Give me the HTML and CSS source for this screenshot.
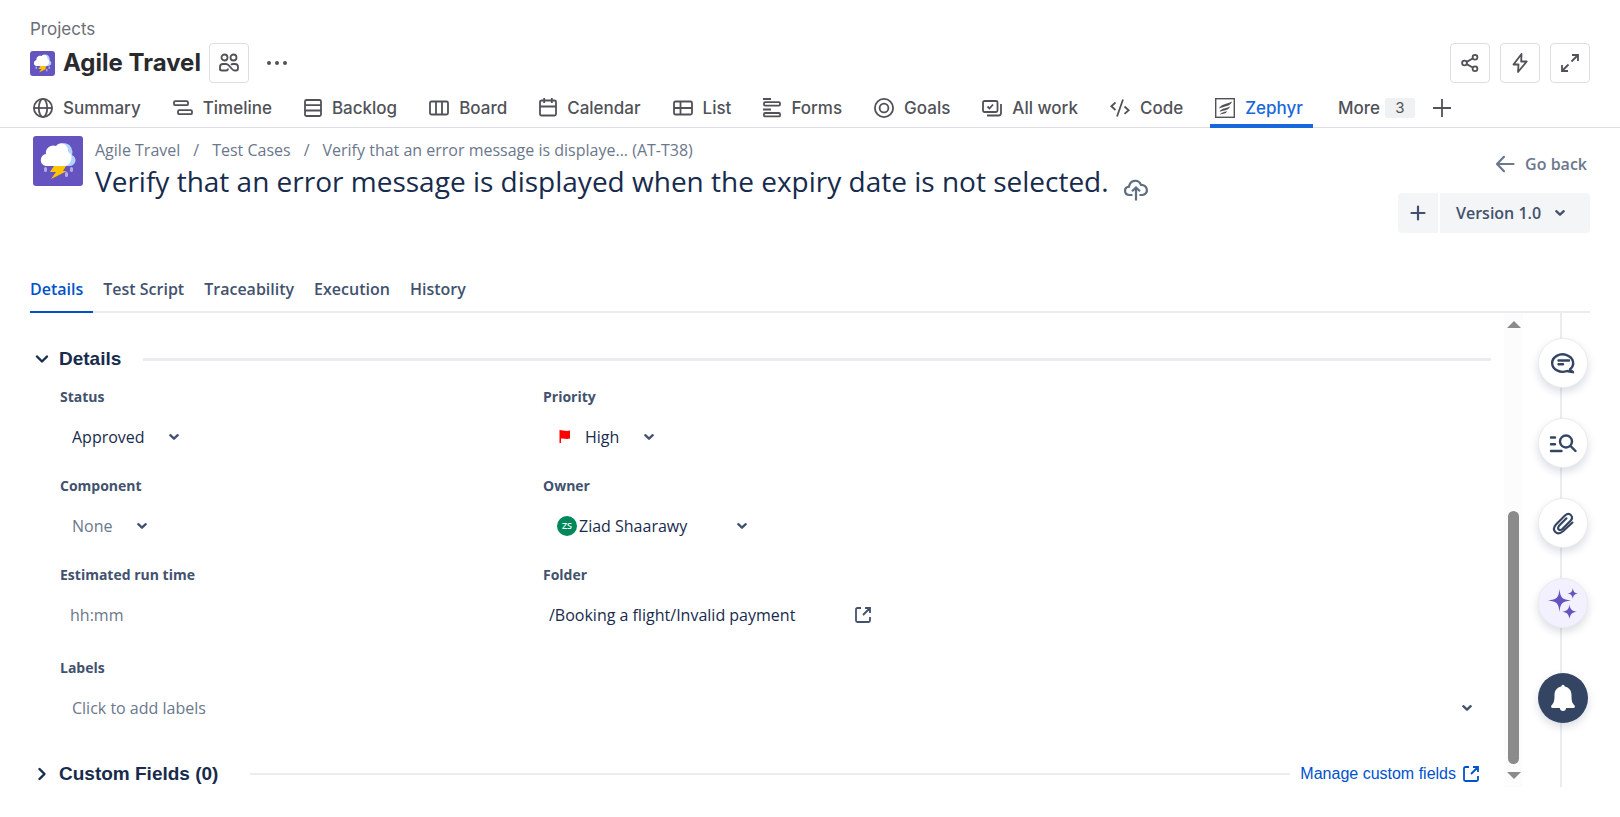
FILE: index.html
```html
<!DOCTYPE html>
<html lang="en">
<head>
<meta charset="utf-8">
<title>Agile Travel - Zephyr</title>
<link rel="stylesheet" href="styles.css">
</head>
<body>
<svg class="defs" aria-hidden="true">
  <symbol id="storm" viewBox="0 0 50 50">
    <rect width="50" height="50" fill="#6554c0"/>
    <path fill="#b3d4ff" d="M26 9c5-4 12-1 13 5 1 2 0 4 0 5 6 3 4 11-3 11H24z"/>
    <path fill="#fff" d="M14 30c-8 0-8-11-1-12-1-6 5-10 10-8 5-6 13-1 12 6 4 2 4 5 3 8-1 4-4 6-7 6z"/>
    <path fill="#ffc400" d="M21 30h12l-3 5h4L18 43l5-7h-6z"/>
    <g fill="#b3a9e6"><rect x="11" y="31" width="3" height="5" rx="1.5"/><rect x="37" y="31" width="3" height="5" rx="1.5"/><rect x="32" y="36" width="3" height="5" rx="1.5"/></g>
  </symbol>
  <symbol id="chev" viewBox="0 0 10 10"><path d="M1.300 3.200 5 6.700l3.700-3.500" fill="none" stroke="currentColor" stroke-width="2.300" stroke-linecap="round" stroke-linejoin="round"/></symbol>
  <symbol id="open" viewBox="0 0 16 16"><path d="M6 1H2.500Q1 1 1 2.500v11Q1 15 2.500 15h11q1.500 0 1.500-1.500V10M10 1h5v5M14.500 1.500 8 8" fill="none" stroke="currentColor" stroke-width="1.800"/></symbol>
</svg>

<header class="project">
  <a class="projects-link" href="#">Projects</a>
  <div class="project-row">
    <svg class="project-logo"><use href="#storm"/></svg>
    <h1 class="project-name">Agile Travel</h1>
    <button class="icon-btn" aria-label="Team"><svg class="i20" viewBox="0 0 20 20"><circle cx="5.500" cy="4.500" r="3"/><circle cx="14.500" cy="4.500" r="3"/><path d="M1 17.500V14q0-3 3-3h3q1.500 0 2.500 1.200l4 4.300q.9 1 2.200 1H17q2 0 2-2V14q0-3-3-3h-2q-1.200 0-2 .8M1 15.500q0 2 2 2h4q2 0 2-2"/></svg></button>
    <button class="plain-btn more-btn" aria-label="More actions"><svg class="i20" viewBox="0 0 20 20"><g fill="currentColor" stroke="none"><circle cx="2" cy="10" r="2"/><circle cx="10" cy="10" r="2"/><circle cx="18" cy="10" r="2"/></g></svg></button>
    <div class="project-tools">
      <button class="icon-btn" aria-label="Share"><svg class="i20" viewBox="0 0 20 20"><circle cx="4.500" cy="10" r="2.400"/><circle cx="15" cy="4.300" r="2.400"/><circle cx="15" cy="15.700" r="2.400"/><path d="m6.700 8.900 6-3.400M6.700 11.100l6 3.400"/></svg></button>
      <button class="icon-btn" aria-label="Automation"><svg class="i20" viewBox="0 0 20 20"><path d="M11.500 1 3.500 11.500h5L8 19l8.700-10.500h-5.500z" stroke-linejoin="round"/></svg></button>
      <button class="icon-btn" aria-label="Full screen"><svg class="i20" viewBox="0 0 20 20"><path d="M12 2h6v6M17.500 2.500 11.500 8.500M8 18H2v-6M2.500 17.500l6-6"/></svg></button>
    </div>
  </div>
  <nav class="project-nav">
    <a class="tab" href="#"><svg class="i20" viewBox="0 0 20 20"><circle cx="10" cy="10" r="9.100"/><ellipse cx="10" cy="10" rx="4.200" ry="9.100"/><path d="M1 10h18"/></svg>Summary</a>
    <a class="tab" href="#"><svg class="i20" viewBox="0 0 20 20"><rect x="1" y="3.200" width="14" height="4" rx="1.300"/><rect x="5" y="12.200" width="14" height="4" rx="1.300"/></svg>Timeline</a>
    <a class="tab" href="#"><svg class="i18" viewBox="0 0 18 20"><rect x="1" y="2" width="16" height="16" rx="1.500"/><path d="M1 7.200h16M1 12.500h16"/></svg>Backlog</a>
    <a class="tab" href="#"><svg class="i20" viewBox="0 0 20 20"><rect x="1" y="3.500" width="18" height="13" rx="1.500"/><path d="M7 3.500v13M13 3.500v13"/></svg>Board</a>
    <a class="tab" href="#"><svg class="i18" viewBox="0 0 18 20"><rect x="1" y="2.500" width="16" height="15" rx="1.500"/><path d="M1 8.500h16M5.200 0v5M12.800 0v5"/></svg>Calendar</a>
    <a class="tab" href="#"><svg class="i20" viewBox="0 0 20 20"><rect x="1" y="3.500" width="18" height="13" rx="1.500"/><path d="M1 10h18M7.500 3.500v13"/></svg>List</a>
    <a class="tab" href="#"><svg class="i18" viewBox="0 0 18 20"><path d="M0 1h8M0 11.500h8"/><rect x="1" y="4.200" width="16" height="3.400" rx="1"/><rect x="1" y="15" width="16" height="3.400" rx="1"/></svg>Forms</a>
    <a class="tab" href="#"><svg class="i20" viewBox="0 0 20 20"><circle cx="10" cy="10" r="9.100"/><circle cx="10" cy="10" r="4.400"/></svg>Goals</a>
    <a class="tab" href="#"><svg class="i20" viewBox="0 0 20 20"><rect x="1" y="3" width="14.500" height="11" rx="1.500"/><path d="m5.500 8.500 2 2 3.500-4M19 6v9q0 2.500-2.500 2.500H5"/></svg>All work</a>
    <a class="tab" href="#"><svg class="i20" viewBox="0 0 20 20"><path d="M5.500 4.500 1.300 8.200 5.500 12M14.500 8.500l4.200 3.700-4.200 3.700M13 1.500 7 18.500"/></svg>Code</a>
    <a class="tab tab-active" href="#" aria-current="page"><svg class="i20 zephyr" viewBox="0 0 20 20"><rect x=".7" y=".7" width="18.600" height="18.600"/><path class="feather" d="M4 10.500C6 6 11 6.500 17 3.500 16 8 9 8.500 4 10.500zM4.500 13.700c2-3.500 6-3 10.500-5.200-1 4.200-6 3.500-10.500 5.200zM5 16.600c1.500-2.600 4-2.100 7-3.600-.8 3-4 2.500-7 3.600z"/></svg>Zephyr</a>
    <a class="tab tab-more" href="#">More <span class="badge">3</span></a>
    <button class="plain-btn add-tab" aria-label="Add view"><svg class="i20" viewBox="0 0 20 20"><path d="M10 1v18M1 10h18"/></svg></button>
  </nav>
</header>

<main class="case">
  <div class="case-head">
    <svg class="case-logo"><use href="#storm"/></svg>
    <div class="case-title">
      <nav class="crumbs"><a href="#">Agile Travel</a><span>/</span><a href="#">Test Cases</a><span>/</span><a href="#">Verify that an error message is displaye... (AT-T38)</a></nav>
      <h2 class="case-name">Verify that an error message is displayed when the expiry date is not selected.
        <svg class="cloud" viewBox="0 0 26 24"><path d="M9.500 17H6.500C1 17 .3 9.500 6 8.700 7 2 15 .5 18 6.800c6.500-.3 8.500 9 1.500 10.200h-3M13 22.500V10M9 13.300l4-3.800 4 3.800"/></svg></h2>
    </div>
    <div class="case-actions">
      <a class="back" href="#"><svg class="i20" viewBox="0 0 20 20"><path d="M18.500 10H2.500M9 2.800 2 10l7 7.200" stroke-linecap="round" stroke-linejoin="round"/></svg>Go back</a>
      <div class="version">
        <button class="version-add" aria-label="New version"><svg class="i20" viewBox="0 0 20 20"><path d="M10 3.500v13M3.500 10h13" stroke-linecap="round"/></svg></button>
        <button class="version-pick">Version 1.0 <svg class="chev"><use href="#chev"/></svg></button>
      </div>
    </div>
  </div>

  <nav class="case-tabs">
    <a class="case-tab case-tab-active" href="#">Details</a><a class="case-tab" href="#">Test Script</a><a class="case-tab" href="#">Traceability</a><a class="case-tab" href="#">Execution</a><a class="case-tab" href="#">History</a>
  </nav>

  <div class="case-body">
    <div class="panel">
      <div class="section-head">
        <svg class="fold" viewBox="0 0 14 14"><path d="m2 4.500 5 5 5-5"/></svg>
        <h3>Details</h3><span class="rule rule-thick"></span>
      </div>
      <form class="fields">
        <div class="field"><label for="status">Status</label>
          <div class="control"><select id="status"><option>Approved</option></select><svg class="chev"><use href="#chev"/></svg></div></div>
        <div class="field"><label for="priority">Priority</label>
          <div class="control control-icon"><svg class="flag" viewBox="0 0 12 14"><path fill="#f00" d="M.5 0C4 0 6 1.800 11 .6v8C7 9.600 5 8 2 8.600V13H.5z"/></svg><select id="priority"><option>High</option></select><svg class="chev"><use href="#chev"/></svg></div></div>
        <div class="field"><label for="component">Component</label>
          <div class="control"><select id="component" class="muted"><option>None</option></select><svg class="chev"><use href="#chev"/></svg></div></div>
        <div class="field"><label for="owner">Owner</label>
          <div class="control control-owner"><span class="avatar">ZS</span><select id="owner" class="owner"><option>Ziad Shaarawy</option></select><svg class="chev"><use href="#chev"/></svg></div></div>
        <div class="field"><label for="runtime">Estimated run time</label>
          <div class="control control-text"><input id="runtime" type="text" placeholder="hh:mm"></div></div>
        <div class="field"><label for="folder">Folder</label>
          <div class="control control-folder"><input id="folder" type="text" value="/Booking a flight/Invalid payment"><a class="folder-link" href="#" aria-label="Open folder"><svg class="i16"><use href="#open"/></svg></a></div></div>
        <div class="field field-wide"><label for="labels">Labels</label>
          <div class="control"><select id="labels" class="muted"><option>Click to add labels</option></select><svg class="chev"><use href="#chev"/></svg></div></div>
      </form>
      <div class="section-head section-custom">
        <svg class="fold" viewBox="0 0 14 14"><path d="m4.500 2 5 5-5 5"/></svg>
        <h3>Custom Fields (0)</h3><span class="rule"></span>
        <a class="manage" href="#">Manage custom fields <svg class="i16"><use href="#open"/></svg></a>
      </div>
    </div>
    <div class="scrollbar" aria-hidden="true"><span class="arrow arrow-up"></span><span class="thumb"></span><span class="arrow arrow-down"></span></div>
    <aside class="rail">
      <button class="round" aria-label="Comments"><svg viewBox="0 0 28 28"><path d="M21 20.300A10.500 8.700 0 1 0 18 22q2 .2 6 1.200-1.500-1.500-3-2.900z" stroke-linejoin="round"/><path d="M9.500 11.500h10.500M9.500 15.300h4.500" stroke-linecap="round"/></svg></button>
      <button class="round" aria-label="Search details"><svg viewBox="0 0 28 28"><circle cx="17" cy="12.500" r="6"/><path d="m21.500 17 5 5M2 8.500h4M2 15.300h4M2 22h10.500" stroke-linecap="round"/></svg></button>
      <button class="round" aria-label="Attachments"><svg class="clip" viewBox="0 0 28 28"><path d="M23.500 13.500 14 22.300c-6 5.200-12-1-7-6.800L16 6.500c4.500-4 9.500 1.200 5.300 5.500l-8 8c-2.800 2.500-5.600-.3-3.300-3.200l7.500-7.500" stroke-linecap="round"/></svg></button>
      <button class="round round-ai" aria-label="AI assistant"><svg viewBox="0 0 32 32"><path d="M12.500 2C13.500 11 15 12.500 24 13.500 15 14.500 13.500 16 12.500 25 11.500 16 10 14.500 1 13.500 10 12.500 11.500 11 12.500 2zM22.500 17.500c.7 5 2.500 6.600 7.500 7.300-5 .7-6.800 2.400-7.500 7.200-.7-4.800-2.500-6.500-7.500-7.200 5-.7 6.800-2.300 7.500-7.300zM25.800 1c.5 3.500 1.700 5 5.200 5.500-3.500.5-4.700 2-5.200 5.500-.5-3.500-1.700-5-5.300-5.500 3.600-.5 4.800-2 5.300-5.500z"/></svg></button>
      <button class="round round-bell" aria-label="Notifications"><svg viewBox="0 0 28 28"><path d="M12.300 2.500a1.700 1.700 0 0 1 3.400 0c4.300.9 6.800 4 6.800 8.500 0 5.500.5 8 2.700 10 1.300 1.300.8 3-1 3h-7q-.5 3-3.200 3t-3.200-3h-7c-1.800 0-2.300-1.700-1-3 2.200-2 2.700-4.500 2.700-10 0-4.500 2.500-7.600 6.800-8.500z"/></svg></button>
    </aside>
  </div>
</main>
</body>
</html>
```

FILE: styles.css
```css
* { box-sizing: border-box; }
body { margin: 0; background: #fff; color: #172b4d; font: 16px/20px "Open Sans", "Noto Sans", sans-serif; }
a { color: inherit; text-decoration: none; }
button, input, select { font: inherit; color: inherit; margin: 0; padding: 0; border: 0; background: none; }
h1, h2, h3 { margin: 0; }
svg { display: block; flex: none; }
.defs { position: absolute; width: 0; height: 0; }
.i20 { width: 20px; height: 20px; }
.i18 { width: 18px; height: 20px; }
.i16 { width: 16px; height: 16px; }
.i20, .i18 { fill: none; stroke: currentColor; stroke-width: 1.8; }
.chev { width: 10px; height: 10px; color: #42526e; }

/* project header */
.project { padding-top: 19px; color: #505258; font-family: Inter, sans-serif; font-size: 17px; }
.projects-link { display: block; margin-left: 30px; color: #6b6e76; }
.project-row { display: flex; align-items: center; padding: 4px 30px 0; }
.project-logo { width: 25px; height: 25px; border-radius: 3px; }
.project-name { margin: 0 8px; font-size: 24px; line-height: 32px; font-weight: 700; color: #292a2e; }
.icon-btn { display: grid; place-items: center; width: 40px; height: 40px; border: 1px solid #dddee1; border-radius: 4px; }
.plain-btn { display: grid; place-items: center; }
.more-btn { margin-left: 18px; }
.project-tools { display: flex; gap: 10px; margin-left: auto; }
.project-nav { display: flex; align-items: flex-start; gap: 17px; padding: 0 28px; box-shadow: inset 0 -1px #dddee1; font-weight: 500; white-space: nowrap; }
.tab { display: flex; align-items: center; gap: 10px; padding: 15px 10px 6px 5px; border-bottom: 4px solid transparent; }
.tab-active { color: #1868db; border-color: #1868db; }
.zephyr { color: #505258; stroke-width: 1.4; }
.feather { fill: currentColor; stroke: none; }
.tab-more { gap: 5px; padding-left: 8px; padding-right: 0; }
.badge { width: 30px; border-radius: 3px; background: #f0f1f2; font-size: 15px; font-weight: 400; text-align: center; }
.add-tab { margin-top: 15px; }

/* test case heading */
.case { padding: 8px 30px 30px; }
.case-head { display: flex; padding-left: 3px; }
.case-logo { width: 50px; height: 50px; border-radius: 3px; }
.case-title { flex: 1; margin-left: 12px; padding-top: 4px; }
.crumbs { display: flex; gap: 13px; color: #6b778c; }
.case-name { display: flex; align-items: center; gap: 14px; font-size: 28px; line-height: 42px; font-weight: 400; }
.cloud { width: 26px; height: 24px; margin-top: 17px; fill: none; stroke: #5e6c84; stroke-width: 2.2; }
.case-actions { display: flex; flex-direction: column; align-items: flex-end; gap: 19px; padding-top: 18px; font-weight: 600; }
.back { display: flex; gap: 10px; padding-right: 3px; color: #6b778c; }
.back .i20, .version .i20 { stroke-width: 2.2; }
.version { display: flex; gap: 2px; color: #42526e; }
.version-add { display: grid; place-items: center; width: 40px; height: 40px; border-radius: 4px 0 0 4px; background: #f4f5f7; }
.version-pick { display: flex; align-items: center; justify-content: space-between; width: 150px; padding: 0 25px 0 16px; border-radius: 0 4px 4px 0; background: #f4f5f7; }

.case-tabs { display: flex; margin-top: 38px; box-shadow: inset 0 -2px #ebecf0; color: #42526e; font-weight: 600; }
.case-tab { padding: 8px 10px 12px; border-bottom: 2px solid transparent; }
.case-tab-active { padding-left: 0; color: #0052cc; border-color: #0052cc; }

/* details */
.case-body { display: flex; }
.panel { flex: 1; padding: 36px 13px 3px 5px; }
.section-head { display: flex; align-items: center; font-family: "Liberation Sans", Arial, sans-serif; }
.section-head h3 { font-size: 19px; line-height: 20px; }
.section-custom { margin-top: 36px; }
.fold { width: 14px; height: 14px; margin-right: 10px; fill: none; stroke: #172b4d; stroke-width: 2.4; stroke-linecap: round; stroke-linejoin: round; }
.rule { flex: 1; height: 2px; margin-left: 32px; background: #ebecf0; }
.rule-thick { height: 3px; margin-left: 22px; }
.fields { display: grid; grid-template-columns: 483px 1fr; padding: 18px 0 0 25px; row-gap: 19px; }
.field-wide { grid-column: 1 / -1; margin-top: 4px; }
.field label { display: block; color: #42526e; font-size: 14px; font-weight: 700; }
.control { display: flex; align-items: center; gap: 24px; height: 40px; margin-top: 10px; padding-left: 12px; }
.control select { appearance: none; height: 32px; }
.field-wide select { flex: 1; }
.field-wide .control { padding-right: 19px; }
.muted, .control input::placeholder { color: #6b778c; opacity: 1; }
.control-icon { padding-left: 16px; }
.flag { width: 12px; height: 14px; margin-right: -10px; }
.control-owner { gap: 2px; padding-left: 14px; }
.owner { width: 156px; }
.avatar { display: grid; place-items: center; width: 20px; height: 20px; border-radius: 50%; background: #00875a; color: #fff; font-size: 9px; line-height: 12px; font-weight: 600; }
.control-text { padding-left: 10px; }
.control-folder { gap: 10px; padding-left: 6px; }
.control-folder input { width: 296px; }
.folder-link { color: #42526e; }
.manage { display: flex; align-items: center; gap: 7px; margin-left: 10px; padding-right: 12px; color: #0052cc; font-size: 16px; }

.scrollbar { display: grid; grid-template-rows: 15px 183fr 253fr 8fr 15px; justify-items: center; width: 19px; background: #fcfcfc; }
.arrow { border: 7px solid transparent; }
.arrow-up { grid-row: 1; align-self: end; border-top: 0; border-bottom-color: #8b8b8b; }
.thumb { grid-row: 3; width: 11px; border-radius: 6px; background: #8b8b8b; }
.arrow-down { grid-row: 5; align-self: start; border-bottom: 0; border-top-color: #8b8b8b; }

.rail { display: flex; flex-direction: column; gap: 30px; margin-left: 15px; padding: 25px 2px 0 0; background: linear-gradient(#ebecf0, #ebecf0) 22px 0 / 2px 100% no-repeat; }
.round { display: grid; place-items: center; width: 50px; height: 50px; border: 1px solid #ebecf0; border-radius: 50%; background: #fff; box-shadow: 0 4px 8px #091e4226; }
.round svg { width: 28px; height: 28px; fill: none; stroke: #344563; stroke-width: 2.4; }
.round .clip { stroke-width: 2.1; }
.round-ai { background: #f3f0ff; }
.round-ai svg { width: 32px; height: 32px; fill: #6554c0; stroke: none; }
.round-bell { margin-top: 15px; border: 0; background: #344563; }
.round-bell svg { fill: #fff; stroke: none; }
```
